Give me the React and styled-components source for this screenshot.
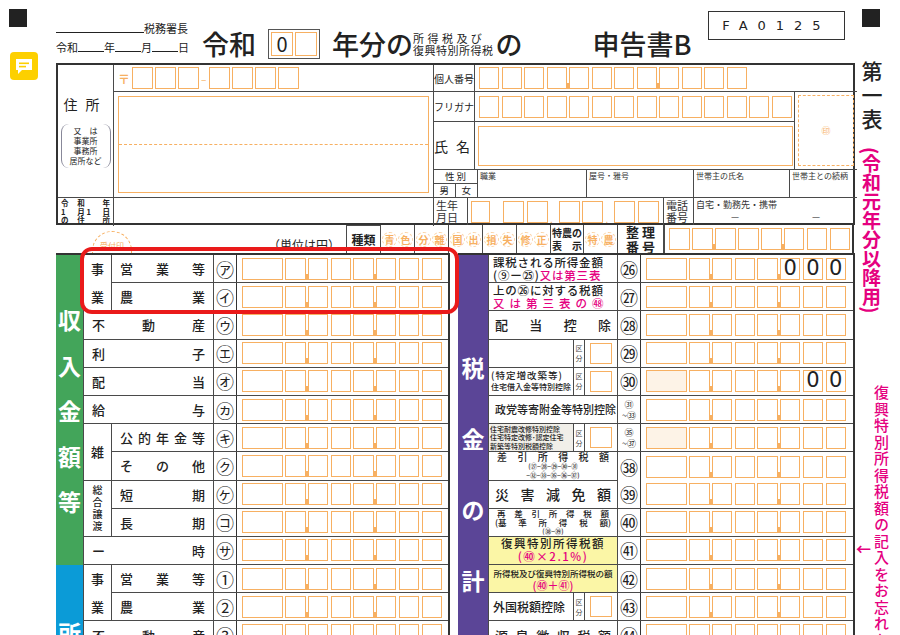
import React from "react";
import styled, { createGlobalStyle } from "styled-components";

const Global = createGlobalStyle`
  * { box-sizing: border-box; }
  body { margin: 0; background: #fff; font-family: "Noto Sans CJK JP", "Noto Sans", sans-serif; color: #222; }
`;

const ORANGE = "#f7b062";
const LINE = "#4a4a4a";
const PINK = "#e5007f";

const Page = styled.div`
  width: 900px;
  height: 635px;
  overflow: hidden;
  position: relative;
  display: grid;
  grid-template-columns: 56px 799px 45px;
`;

const LeftRail = styled.div`
  display: flex;
  flex-direction: column;
  padding: 9px 0 0 9px;
  gap: 25px;
`;

const BlackSquare = styled.div`
  width: 18px;
  height: 18px;
  background: #222;
`;

const NoteIcon = styled.div`
  width: 28px;
  height: 28px;
  margin-left: 1px;
  border-radius: 4px;
  background: #fdd000;
  display: flex;
  align-items: center;
  justify-content: center;
`;

const Middle = styled.div`
  display: flex;
  flex-direction: column;
`;

const Header = styled.div`
  height: 63px;
  display: flex;
  align-items: flex-end;
  padding-bottom: 4px;
  position: relative;
`;

const DateBlock = styled.div`
  display: flex;
  flex-direction: column;
  font-size: 11px;
  line-height: 19px;
  width: 146px;
  padding-bottom: 2px;
`;

const Blank = styled.span`
  display: inline-block;
  width: ${(p) => p.$w}px;
  border-bottom: 1px solid #222;
  height: 12px;
`;

const Big = styled.span`
  font-size: 27px;
  font-weight: 500;
  line-height: 30px;
  margin-left: ${(p) => p.$ml || 0}px;
`;

const YearBox = styled.div`
  display: flex;
  gap: 2px;
  padding: 2px;
  border: 1px solid #555;
  margin-left: 12px;
  height: 30px;
`;

const YearCell = styled.div`
  width: 22px;
  border: 1px solid ${ORANGE};
  font-size: 20px;
  line-height: 22px;
  text-align: center;
`;

const SmallStack = styled.div`
  display: flex;
  flex-direction: column;
  font-size: 11px;
  line-height: 12px;
  margin: 0 2px 3px 0;
  letter-spacing: ${(p) => p.$ls || 0}px;
`;

const FormCode = styled.div`
  position: absolute;
  right: 10px;
  top: 11px;
  width: 137px;
  height: 29px;
  border: 1.5px solid #333;
  display: flex;
  align-items: center;
  justify-content: center;
  font-family: "DejaVu Sans", sans-serif;
  font-size: 13px;
  letter-spacing: 10px;
`;

/* ---------- top form ---------- */
const TopForm = styled.div`
  display: grid;
  grid-template-columns: 56px 320px 423px;
  grid-template-rows: 27px 30px 48px 28px 28px;
  border: 2px solid #333;
  height: 162px;
`;

const Cell = styled.div`
  grid-column: ${(p) => p.$col || "auto"};
  grid-row: ${(p) => p.$row || "auto"};
  border-right: ${(p) => (p.$noR ? "none" : `1px solid ${LINE}`)};
  border-bottom: ${(p) => (p.$noB ? "none" : `1px solid ${LINE}`)};
  display: flex;
  align-items: center;
  justify-content: ${(p) => p.$jc || "flex-start"};
  flex-direction: ${(p) => p.$dir || "row"};
  padding: ${(p) => p.$pad || "0"};
  font-size: ${(p) => p.$fs || 11}px;
  position: relative;
  min-width: 0;
`;

const AddressLabel = styled.div`
  display: flex;
  flex-direction: column;
  align-items: center;
  gap: 10px;
`;

const Paren = styled.div`
  font-size: 8px;
  line-height: 10px;
  text-align: center;
  border-left: 1px solid #889;
  border-right: 1px solid #889;
  border-radius: 8px;
  padding: 2px 8px;
`;

const TinyGrid = styled.div`
  display: grid;
  grid-template-columns: repeat(3, 1fr);
  width: 100%;
  font-size: 7.5px;
  line-height: 8.5px;
  padding: 0 3px;
  font-weight: 600;
`;

const OBox = styled.div`
  width: ${(p) => p.$w || 20}px;
  height: ${(p) => p.$h || 22}px;
  border: 1.5px solid ${ORANGE};
  flex: none;
  position: relative;
  background: ${(p) => (p.$tint ? "#fdf3e7" : "#fff")};
  font-family: "DejaVu Sans", sans-serif;
  font-size: 21px;
  line-height: 19px;
  text-align: center;
  &::before {
    content: "";
    display: ${(p) => (p.$tick ? "block" : "none")};
    position: absolute;
    left: -3px;
    bottom: -1px;
    width: 2px;
    height: 6px;
    background: ${ORANGE};
  }
`;

const BoxLine = styled.div`
  display: flex;
  align-items: center;
  gap: ${(p) => p.$gap ?? 2.5}px;
  padding: ${(p) => p.$pad || "0 4px"};
`;

const Postal = styled.span`
  color: ${ORANGE};
  font-weight: 700;
  font-size: 12px;
  margin-right: 2px;
`;

const AddressBox = styled.div`
  margin: 4px;
  width: 312px;
  height: calc(100% - 8px);
  border: 1.5px solid ${ORANGE};
  display: flex;
  align-items: center;
  & > div {
    width: 100%;
    border-top: 1px dashed ${ORANGE};
  }
`;

const RightTop = styled.div`
  grid-column: 3;
  grid-row: 1 / 6;
  display: grid;
  grid-template-columns: 41px 320px 62px;
  grid-template-rows: 27px 30px 48px 28px 27px;
`;

const Seal = styled.div`
  grid-column: 3;
  grid-row: 2 / 4;
  border-bottom: 1px solid ${LINE};
  padding: 3px;
  & > div {
    height: 100%;
    border: 1px dashed ${ORANGE};
    color: ${ORANGE};
    font-size: 9px;
    display: flex;
    align-items: center;
    justify-content: center;
  }
`;

const Strip = styled.div`
  grid-column: 1 / 4;
  grid-row: ${(p) => p.$row};
  display: flex;
  border-bottom: ${(p) => (p.$noB ? "none" : `1px solid ${LINE}`)};
`;

const StripCell = styled.div`
  width: ${(p) => p.$w}px;
  flex: ${(p) => (p.$w ? "none" : 1)};
  border-right: ${(p) => (p.$noR ? "none" : `1px solid ${LINE}`)};
  font-size: ${(p) => p.$fs || 8}px;
  line-height: ${(p) => p.$lh || 10}px;
  padding: 1px 2px;
  display: flex;
  flex-direction: column;
  color: #333;
`;

const SexGrid = styled.div`
  display: grid;
  grid-template-columns: 1fr 1fr;
  grid-template-rows: 14px 13px;
  width: 44px;
  border-right: 1px solid ${LINE};
  font-size: 9.5px;
  text-align: center;
  & > span { border-bottom: 1px solid ${LINE}; line-height: 13px; }
  & > span:first-child { grid-column: 1 / 3; }
  & > span:nth-child(2) { border-right: 1px solid ${LINE}; border-bottom: none; }
  & > span:nth-child(3) { border-bottom: none; }
`;

const Dot = styled.span`
  color: ${ORANGE};
  font-size: 10px;
  align-self: flex-end;
  width: 6px;
`;

/* ---------- kind row ---------- */
const KindRow = styled.div`
  height: 28px;
  display: flex;
`;

const StampArea = styled.div`
  width: 290px;
  display: flex;
  align-items: flex-end;
  justify-content: space-between;
  padding: 0 6px 0 36px;
  font-size: 12px;
`;

const Uketsuke = styled.div`
  width: 40px;
  height: 22px;
  border: 1px dashed ${ORANGE};
  border-bottom: none;
  border-radius: 20px 20px 0 0;
  color: ${ORANGE};
  font-size: 8px;
  text-align: center;
  padding-top: 8px;
`;

const KindCell = styled.div`
  width: ${(p) => p.$w}px;
  border-left: 1px solid ${LINE};
  border-top: ${(p) => (p.$top ? `1.5px solid ${LINE}` : "none")};
  display: flex;
  align-items: center;
  justify-content: center;
  gap: 1px;
  font-size: ${(p) => p.$fs || 12}px;
  line-height: 12px;
  font-weight: 700;
  flex-direction: ${(p) => p.$dir || "row"};
`;

const StampChar = styled.span`
  width: 15px;
  height: 15px;
  border: 1px dashed #fbd2a4;
  border-radius: 50%;
  color: ${ORANGE};
  font-size: 10px;
  line-height: 13px;
  text-align: center;
  font-weight: 700;
`;

/* ---------- lower tables ---------- */
const Lower = styled.div`
  display: flex;
  gap: 8px;
`;

const Table = styled.div`
  width: ${(p) => p.$w}px;
  display: flex;
  flex-direction: column;
  border-top: 2px solid #333;
`;

const Section = styled.div`
  display: flex;
  border-right: 2px solid #333;
`;

const Band = styled.div`
  width: ${(p) => p.$w}px;
  flex: none;
  background: ${(p) => p.$bg};
  color: #fff;
  font-size: 23px;
  line-height: 24px;
  font-weight: 700;
  display: flex;
  flex-direction: column;
  align-items: center;
  justify-content: ${(p) => p.$jc || "space-between"};
  gap: ${(p) => p.$gap || 0}px;
  padding: ${(p) => p.$pad || "0"};
  border-right: 1px solid ${LINE};
`;

const Rows = styled.div`
  flex: 1;
  display: flex;
  flex-direction: column;
`;

const Group = styled.div`
  display: flex;
`;

const SubLabel = styled.div`
  width: 28px;
  flex: none;
  border-right: 1px solid ${LINE};
  border-bottom: 1.5px solid ${LINE};
  display: flex;
  flex-direction: column;
  align-items: center;
  justify-content: ${(p) => p.$jc || "space-around"};
  font-size: ${(p) => p.$fs || 13}px;
  line-height: ${(p) => p.$lh || 15}px;
  font-weight: 500;
`;

const Row = styled.div`
  height: 28.2px;
  display: grid;
  grid-template-columns: ${(p) => p.$label}px 23px 1fr;
  border-bottom: 1.5px solid ${LINE};
  background: ${(p) => (p.$hl ? "#fbf6a6" : "transparent")};
`;

const Label = styled.div`
  display: flex;
  align-items: center;
  justify-content: space-between;
  padding: 0 ${(p) => p.$px ?? 8}px;
  font-size: 13px;
  font-weight: 500;
  border-right: 1px solid ${LINE};
  min-width: 0;
`;

const Num = styled.div`
  display: flex;
  align-items: center;
  justify-content: center;
  flex-direction: column;
  font-size: ${(p) => p.$fs || 18}px;
  line-height: ${(p) => p.$lh || 18}px;
  border-right: 1.5px solid #333;
  background: #fff;
`;

const Amount = styled.div`
  display: flex;
  align-items: center;
  background: #fff;
  padding-left: 5px;
`;

const RLabel = styled.div`
  display: flex;
  border-right: 1px solid ${LINE};
  min-width: 0;
`;

const RText = styled.div`
  flex: 1;
  display: flex;
  flex-direction: column;
  justify-content: center;
  padding: 0 ${(p) => p.$px ?? 4}px;
  font-size: ${(p) => p.$fs || 12}px;
  line-height: ${(p) => p.$lh || 13}px;
  font-weight: 500;
  letter-spacing: ${(p) => p.$ls || 0}px;
  text-align: ${(p) => p.$ta || "left"};
  white-space: nowrap;
  overflow: hidden;
  background: ${(p) => (p.$tint ? "#f1efe9" : "transparent")};
`;

const Spread = styled.div`
  display: flex;
  justify-content: space-between;
  padding: 0 ${(p) => p.$px ?? 0}px;
`;

const Pink = styled.span`
  color: ${PINK};
`;

const Kubun = styled.div`
  width: 12px;
  border-left: 1px solid ${LINE};
  border-right: 1px solid ${LINE};
  font-size: 7px;
  line-height: 10px;
  display: flex;
  flex-direction: column;
  align-items: center;
  justify-content: center;
  color: #444;
`;

const KubunBox = styled.div`
  width: 32px;
  padding: 3px 5px;
  & > div {
    height: 100%;
    border: 1.5px solid ${ORANGE};
  }
`;

/* ---------- right rail ---------- */
const RightRail = styled.div`
  display: flex;
  flex-direction: column;
  align-items: flex-start;
  padding: 9px 0 0 7px;
  position: relative;
`;

const Vertical = styled.div`
  writing-mode: vertical-rl;
  font-size: ${(p) => p.$fs}px;
  line-height: ${(p) => p.$lh || p.$fs}px;
  color: ${(p) => p.$color || "#222"};
  font-weight: ${(p) => p.$fw || 500};
  margin: ${(p) => p.$m || 0};
  letter-spacing: ${(p) => p.$ls || 0}px;
`;

const Arrow = styled.div`
  position: absolute;
  left: 1px;
  top: 538px;
  color: ${PINK};
  font-size: 15px;
  font-weight: 700;
`;

const Highlight = styled.div`
  position: absolute;
  left: 80px;
  top: 247px;
  width: 379px;
  height: 67px;
  border: 4px solid #ea1a1a;
  border-radius: 12px;
  pointer-events: none;
`;

/* ---------- helpers ---------- */
const Amounts = ({ values = [], tint }) => (
  <Amount>
    <BoxLine $pad="0" $gap={2.4}>
      {Array.from({ length: 8 }).map((_, i) => (
        <OBox
          key={i}
          $w={i === 0 ? 41 : 20.3}
          $tint={tint && i === 0}
          $tick={i === 2 || i === 5}
        >
          {values[i]}
        </OBox>
      ))}
    </BoxLine>
  </Amount>
);

const Spaced = ({ text, px }) => (
  <Label $px={px}>
    {text.split("").map((c, i) => (
      <span key={i}>{c}</span>
    ))}
  </Label>
);

const IncomeRow = ({ text, mark, w = 130 }) => (
  <Row $label={w}>
    <Spaced text={text} />
    <Num>{mark}</Num>
    <Amounts />
  </Row>
);

const KubunCells = () => (
  <>
    <Kubun>
      <span>区</span>
      <span>分</span>
    </Kubun>
    <KubunBox>
      <div />
    </KubunBox>
  </>
);

const TaxRow = ({ children, mark, kubun, values, tint, hl, numFs, numLh }) => (
  <Row $label={129} $hl={hl}>
    <RLabel>
      {children}
      {kubun && <KubunCells />}
    </RLabel>
    <Num $fs={numFs} $lh={numLh}>{mark}</Num>
    <Amounts values={values} tint={tint} />
  </Row>
);

const Stamp = ({ text }) => (
  <KindCell $w={34}>
    {text.split("").map((c, i) => (
      <StampChar key={i}>{c}</StampChar>
    ))}
  </KindCell>
);

const App = () => (
  <Page>
    <Global />
    <LeftRail>
      <BlackSquare />
      <NoteIcon>
        <svg width="18" height="17" viewBox="0 0 18 17">
          <path d="M1 1h16v11H7l-4 4v-4H1z" fill="#fff" />
          <rect x="4" y="4.5" width="10" height="1.6" fill="#fdd000" />
          <rect x="4" y="7.8" width="7" height="1.6" fill="#fdd000" />
        </svg>
      </NoteIcon>
    </LeftRail>

    <Middle>
      <Header>
        <DateBlock>
          <span>
            <Blank $w={88} />
            税務署長
          </span>
          <span>
            令和<Blank $w={26} />年<Blank $w={26} />月<Blank $w={26} />日
          </span>
        </DateBlock>
        <Big>令和</Big>
        <YearBox>
          <YearCell>0</YearCell>
          <YearCell />
        </YearBox>
        <Big $ml={12}>年分の</Big>
        <SmallStack $ls={0.5}>
          <span>所 得 税 及 び</span>
          <span>復興特別所得税</span>
        </SmallStack>
        <Big>の</Big>
        <Big $ml={70}>申告書B</Big>
        <FormCode>FA0125</FormCode>
      </Header>

      <TopForm>
        <Cell $col="1" $row="1 / 5" $jc="center">
          <AddressLabel>
            <span style={{ fontSize: 14, letterSpacing: 8 }}>住所</span>
            <Paren>
              又　は
              <br />
              事業所
              <br />
              事務所
              <br />
              居所など
            </Paren>
          </AddressLabel>
        </Cell>
        <Cell $col="2" $row="1" $pad="0 0 0 4px">
          <Postal>〒</Postal>
          <BoxLine $pad="0" $gap={2}>
            <OBox $w={21} />
            <OBox $w={21} />
            <OBox $w={21} />
            <Dot style={{ alignSelf: "center", color: ORANGE }}>–</Dot>
            <OBox $w={21} />
            <OBox $w={21} />
            <OBox $w={21} />
            <OBox $w={21} />
          </BoxLine>
        </Cell>
        <Cell $col="2" $row="2 / 5">
          <AddressBox>
            <div />
          </AddressBox>
        </Cell>
        <Cell $col="1" $row="5" $noB>
          <TinyGrid>
            <span>令</span><span>和</span><span style={{ textAlign: "right" }}>年</span>
            <span>1</span><span>月 1</span><span style={{ textAlign: "right" }}>日</span>
            <span>の</span><span>住</span><span style={{ textAlign: "right" }}>所</span>
          </TinyGrid>
        </Cell>
        <Cell $col="2" $row="5" $noB />

        <RightTop>
          <Cell $col="1" $row="1" $fs={10}>個人番号</Cell>
          <Cell $col="2 / 4" $row="1" $noR>
            <BoxLine $gap={2.5}>
              {Array.from({ length: 12 }).map((_, i) => (
                <OBox key={i} $w={20} $h={22} $tick={i === 4 || i === 8} />
              ))}
            </BoxLine>
          </Cell>
          <Cell $col="1" $row="2" $fs={10}>フリガナ</Cell>
          <Cell $col="2" $row="2">
            <BoxLine $gap={2.5}>
              {Array.from({ length: 14 }).map((_, i) => (
                <OBox key={i} $w={20} $h={22} />
              ))}
            </BoxLine>
          </Cell>
          <Seal>
            <div>㊞</div>
          </Seal>
          <Cell $col="1" $row="3" $fs={14}>
            <Spread style={{ width: "100%", paddingRight: 4 }}>
              <span>氏</span>
              <span>名</span>
            </Spread>
          </Cell>
          <Cell $col="2" $row="3" $pad="3px 0 3px 3px">
            <OBox $w={315} $h={40} />
          </Cell>
          <Strip $row="4">
            <SexGrid>
              <span>性 別</span>
              <span>男</span>
              <span>女</span>
            </SexGrid>
            <StripCell $w={109}>職業</StripCell>
            <StripCell $w={107}>屋号・雅号</StripCell>
            <StripCell $w={96}>世帯主の氏名</StripCell>
            <StripCell $noR>世帯主との続柄</StripCell>
          </Strip>
          <Strip $row="5" $noB>
            <StripCell $w={34} $fs={11} $lh={12}>
              <span>生年</span>
              <span>月日</span>
            </StripCell>
            <StripCell $w={196} style={{ flexDirection: "row", alignItems: "center", gap: 2.5, paddingLeft: 3 }}>
              <OBox $w={19} $h={22} />
              <span style={{ width: 8 }} />
              <OBox $w={21} $h={22} />
              <OBox $w={21} $h={22} />
              <Dot>.</Dot>
              <OBox $w={21} $h={22} />
              <OBox $w={21} $h={22} />
              <Dot>.</Dot>
              <OBox $w={21} $h={22} />
              <OBox $w={21} $h={22} />
            </StripCell>
            <StripCell $w={30} $fs={11} $lh={12}>
              <span>電話</span>
              <span>番号</span>
            </StripCell>
            <StripCell $noR $fs={9} $lh={12}>
              <span>自宅・勤務先・携帯</span>
              <Spread $px={35}>
                <span>—</span>
                <span>—</span>
              </Spread>
            </StripCell>
          </Strip>
        </RightTop>
      </TopForm>

      <KindRow>
        <StampArea>
          <Uketsuke>受付印</Uketsuke>
          <span>（単位は円）</span>
        </StampArea>
        <KindCell $w={34} $top>種類</KindCell>
        <Stamp text="青色" />
        <Stamp text="分離" />
        <Stamp text="国出" />
        <Stamp text="損失" />
        <Stamp text="修正" />
        <KindCell $w={33} $dir="column" $fs={10}>
          <span>特農の</span>
          <Spread style={{ width: 30 }}>
            <span>表</span>
            <span>示</span>
          </Spread>
        </KindCell>
        <Stamp text="特農" />
        <KindCell $w={47} $dir="column" $fs={13} style={{ borderRight: `1px solid ${LINE}`, lineHeight: "14px" }}>
          <span>整 理</span>
          <span>番 号</span>
        </KindCell>
        <KindCell $w={190} style={{ justifyContent: "flex-start", borderRight: "2px solid #333", paddingLeft: 4 }}>
          <BoxLine $pad="0" $gap={2.4}>
            {Array.from({ length: 8 }).map((_, i) => (
              <OBox key={i} $w={i === 0 ? 21 : 20.5} $h={22} $tick={i === 2 || i === 5} />
            ))}
          </BoxLine>
        </KindCell>
      </KindRow>

      <Lower>
        <Table $w={394}>
          <Section>
            <Band $w={28} $bg="#43a55a" $pad="52px 0 52px">
              <span>収</span>
              <span>入</span>
              <span>金</span>
              <span>額</span>
              <span>等</span>
            </Band>
            <Rows>
              <Group>
                <SubLabel>
                  <span>事</span>
                  <span>業</span>
                </SubLabel>
                <Rows>
                  <IncomeRow text="営業等" mark="㋐" w={102} />
                  <IncomeRow text="農業" mark="㋑" w={102} />
                </Rows>
              </Group>
              <IncomeRow text="不動産" mark="㋒" />
              <IncomeRow text="利子" mark="㋓" />
              <IncomeRow text="配当" mark="㋔" />
              <IncomeRow text="給与" mark="㋕" />
              <Group>
                <SubLabel>
                  <span>雑</span>
                </SubLabel>
                <Rows>
                  <IncomeRow text="公的年金等" mark="㋖" w={102} />
                  <IncomeRow text="その他" mark="㋗" w={102} />
                </Rows>
              </Group>
              <Group>
                <SubLabel $fs={10} $lh={12} $jc="center">
                  <span>総</span>
                  <span>合</span>
                  <span>譲</span>
                  <span>渡</span>
                </SubLabel>
                <Rows>
                  <IncomeRow text="短期" mark="㋘" w={102} />
                  <IncomeRow text="長期" mark="㋙" w={102} />
                </Rows>
              </Group>
              <IncomeRow text="ー時" mark="㋚" />
            </Rows>
          </Section>
          <Section>
            <Band $w={28} $bg="#0b9bd7" $jc="flex-end" $pad="0 0 6px">
              <span>所</span>
            </Band>
            <Rows>
              <Group>
                <SubLabel>
                  <span>事</span>
                  <span>業</span>
                </SubLabel>
                <Rows>
                  <IncomeRow text="営業等" mark="①" w={102} />
                  <IncomeRow text="農業" mark="②" w={102} />
                </Rows>
              </Group>
              <IncomeRow text="不動産" mark="③" />
            </Rows>
          </Section>
        </Table>

        <Table $w={397}>
          <Section>
            <Band $w={31} $bg="#5b4597" $pad="100px 0 0" $jc="flex-start" $gap={47}>
              <span>税</span>
              <span>金</span>
              <span>の</span>
              <span>計</span>
            </Band>
            <Rows>
              <TaxRow mark="㉖" values={[, , , , , "0", "0", "0"]}>
                <RText $fs={11.5} $lh={13} $ls={0.8}>
                  <span>課税される所得金額</span>
                  <span>
                    (⑨ー㉕)<Pink>又は第三表</Pink>
                  </span>
                </RText>
              </TaxRow>
              <TaxRow mark="㉗">
                <RText $fs={11.5} $lh={13} $ls={0.8}>
                  <span>上の㉖に対する税額</span>
                  <Pink style={{ letterSpacing: 5 }}>又は第三表の㊽</Pink>
                </RText>
              </TaxRow>
              <TaxRow mark="㉘">
                <RText $fs={13} $px={6}>
                  <Spread>
                    <span>配</span><span>当</span><span>控</span><span>除</span>
                  </Spread>
                </RText>
              </TaxRow>
              <TaxRow mark="㉙" kubun>
                <RText />
              </TaxRow>
              <TaxRow mark="㉚" kubun values={[, , , , , , "0", "0"]} tint>
                <RText $fs={8} $lh={12} $px={2}>
                  <span style={{ fontSize: 9.5, letterSpacing: 1 }}>(特定増改築等)</span>
                  <span>住宅借入金等特別控除</span>
                </RText>
              </TaxRow>
              <TaxRow mark={<><span>㉛</span><span>~㉝</span></>} numFs={9} numLh={11}>
                <RText $fs={11} $px={6}>政党等寄附金等特別控除</RText>
              </TaxRow>
              <TaxRow mark={<><span>㉟</span><span>~㊲</span></>} numFs={9} numLh={11} kubun tint>
                <RText $fs={7} $lh={8.5} $px={1} $tint>
                  <span>住宅耐震改修特別控除</span>
                  <span>住宅特定改修･認定住宅</span>
                  <span>新築等特別税額控除</span>
                </RText>
              </TaxRow>
              <TaxRow mark="㊳">
                <RText $fs={10} $lh={9.5} $ta="center">
                  <Spread $px={4}>
                    <span>差</span><span>引</span><span>所</span><span>得</span><span>税</span><span>額</span>
                  </Spread>
                  <span style={{ fontSize: 6.5 }}>(㉗−㉘−㉙−㉚−㉛</span>
                  <span style={{ fontSize: 6.5 }}>−㉜−㉝−㉟−㊱−㊲)</span>
                </RText>
              </TaxRow>
              <TaxRow mark="㊴">
                <RText $fs={14} $px={6}>
                  <Spread>
                    <span>災</span><span>害</span><span>減</span><span>免</span><span>額</span>
                  </Spread>
                </RText>
              </TaxRow>
              <TaxRow mark="㊵">
                <RText $fs={8.5} $lh={9} $ta="center">
                  <Spread $px={4}>
                    <span>再</span><span>差</span><span>引</span><span>所</span><span>得</span><span>税</span><span>額</span>
                  </Spread>
                  <Spread $px={2}>
                    <span>(基</span><span>準</span><span>所</span><span>得</span><span>税</span><span>額)</span>
                  </Spread>
                  <span style={{ fontSize: 6.5 }}>(㊳−㊴)</span>
                </RText>
              </TaxRow>
              <TaxRow mark="㊶" hl>
                <RText $fs={11.5} $lh={13} $ls={1.5} $ta="center">
                  <span>復興特別所得税額</span>
                  <Pink>(㊵×2.1%)</Pink>
                </RText>
              </TaxRow>
              <TaxRow mark="㊷" hl>
                <RText $fs={8.5} $lh={12} $ta="center" $px={2}>
                  <span>所得税及び復興特別所得税の額</span>
                  <Pink style={{ fontSize: 11 }}>(㊵＋㊶)</Pink>
                </RText>
              </TaxRow>
              <TaxRow mark="㊸" kubun>
                <RText $fs={12}>外国税額控除</RText>
              </TaxRow>
              <TaxRow mark="㊹">
                <RText $fs={13} $px={6}>
                  <Spread>
                    <span>源</span><span>泉</span><span>徴</span><span>収</span><span>税</span><span>額</span>
                  </Spread>
                </RText>
              </TaxRow>
            </Rows>
          </Section>
        </Table>
      </Lower>
    </Middle>

    <RightRail>
      <BlackSquare />
      <Vertical $fs={21} $lh={24} $m="34px 0 0 -2px" $ls={3}>第一表</Vertical>
      <Vertical $fs={19} $lh={22} $color={PINK} $fw={700} $m="14px 0 0 -2px">
        (令和元年分以降用)
      </Vertical>
      <Vertical $fs={15} $lh={17} $color={PINK} $m="72px 0 0 11px" $ls={1.5}>
        復興特別所得税額の記入をお忘れなく
      </Vertical>
      <Arrow>←</Arrow>
    </RightRail>

    <Highlight />
  </Page>
);

export default App;
